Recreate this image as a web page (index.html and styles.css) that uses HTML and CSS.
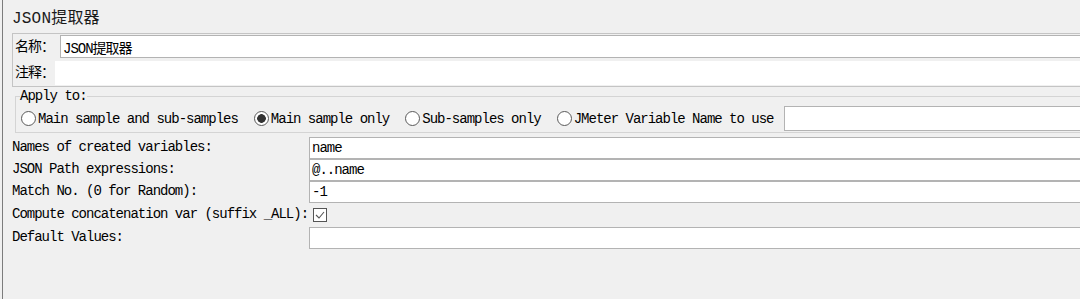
FILE: index.html
```html
<!DOCTYPE html>
<html lang="zh">
<head>
<meta charset="utf-8">
<title>JSON提取器</title>
<link rel="stylesheet" href="styles.css">
</head>
<body>
<div class="frame">
  <div class="title">JSON提取器</div>

  <div class="name-panel">
    <div class="np-row r1">
      <span class="np-label l1">名称：</span>
      <div class="field f1">JSON提取器</div>
    </div>
    <div class="np-row r2">
      <span class="np-label l2">注释：</span>
      <div class="field f2"></div>
    </div>
  </div>

  <fieldset class="apply">
    <legend>Apply to:</legend>
    <div class="radios">
      <label class="opt first"><span class="radio"></span><span>Main sample and sub-samples</span></label>
      <label class="opt"><span class="radio on"></span><span>Main sample only</span></label>
      <label class="opt"><span class="radio"></span><span>Sub-samples only</span></label>
      <label class="opt last"><span class="radio"></span><span>JMeter Variable Name to use</span></label>
      <div class="field var"></div>
    </div>
  </fieldset>

  <div class="form">
    <div class="lbl">Names of created variables:</div>
    <div class="field in">name</div>
    <div class="lbl">JSON Path expressions:</div>
    <div class="field in">@..name</div>
    <div class="lbl">Match No. (0 for Random):</div>
    <div class="field in">-1</div>
    <div class="lbl">Compute concatenation var (suffix _ALL):</div>
    <div class="cbcell">
      <span class="checkbox">
        <svg width="12" height="12" viewBox="0 0 12 12"><polyline points="2,6 5,9 10,3" fill="none" stroke="#555" stroke-width="1.1"/></svg>
      </span>
    </div>
    <div class="lbl">Default Values:</div>
    <div class="field in"></div>
  </div>
</div>
</body>
</html>
```

FILE: styles.css
```css
html, body {
  margin: 0;
  padding: 0;
  background: #f0f0f0;
  overflow: hidden;
}

body {
  width: 1080px;
  height: 299px;
  padding-left: 2px;
  box-sizing: border-box;
  font-family: "Liberation Mono", "Noto Sans CJK SC", monospace;
  font-size: 14px;
  letter-spacing: -1px;
  color: #000;
}

.frame {
  width: 1120px;
  height: 299px;
  border-left: 1px solid #7c7c7c;
  padding-left: 9px;
  box-sizing: border-box;
}

.title {
  padding-top: 8px;
  height: 22px;
  line-height: 22px;
  font-size: 16px;
  letter-spacing: 0.2px;
  color: #1a1a1a;
  margin-bottom: 3px;
}

.name-panel {
  border: 1px solid #c4c4c4;
  border-right: none;
  padding: 1px 0 1px 2px;
}

.np-row {
  display: flex;
  align-items: center;
}

.r1 { height: 23px; }
.r2 { height: 24px; margin-top: 3px; }

.np-label {
  font-size: 14px;
  line-height: 16px;
}

.l1 { width: 45px; }
.l2 { width: 40px; }

.field {
  background: #fff;
  box-sizing: border-box;
  border: 1px solid #b3b3b3;
  border-right: none;
  padding-left: 2px;
  display: flex;
  align-items: center;
  color: #000;
}

.f1 { flex: 1; height: 23px; }
.f2 { flex: 1; height: 24px; border: none; }

.apply {
  margin: 1px 0 0 3px;
  padding: 2px 0 1px 4px;
  border: 1px solid #d4d4d4;
  border-right: none;
  min-width: 0;
}

.apply legend {
  padding: 0;
  line-height: 16px;
}

.radios {
  display: flex;
  align-items: center;
  height: 25px;
}

.opt {
  display: flex;
  align-items: center;
  margin-right: 16px;
  white-space: nowrap;
}

.opt.first { margin-left: 1px; }
.opt.last { margin-right: 10px; }

.radio {
  width: 15px;
  height: 15px;
  box-sizing: border-box;
  border: 1px solid #5a5a5a;
  border-radius: 50%;
  background: #fff;
  margin-right: 2px;
  flex: none;
}

.radio.on {
  background: radial-gradient(circle, #333 0, #333 4px, #fff 4.6px);
}

.var { flex: 1; height: 25px; }

.form {
  margin-top: 4px;
  display: grid;
  grid-template-columns: 297px 1fr;
  grid-template-rows: 22px 22px 22px 24px 22px;
}

.lbl {
  display: flex;
  align-items: center;
  padding-bottom: 2px;
  white-space: nowrap;
}

.in { height: 22px; }

.cbcell {
  display: flex;
  align-items: center;
  padding-left: 4px;
}

.checkbox {
  width: 14px;
  height: 14px;
  box-sizing: border-box;
  border: 1px solid #555;
  background: #fff;
  display: flex;
  align-items: center;
  justify-content: center;
}
```
